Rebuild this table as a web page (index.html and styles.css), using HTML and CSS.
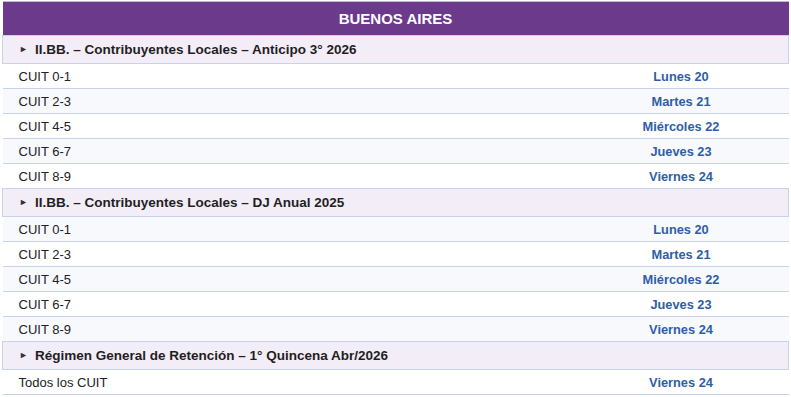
FILE: index.html
```html
<!DOCTYPE html>
<html lang="es">
<head>
<meta charset="utf-8">
<link rel="stylesheet" href="styles.css">
</head>
<body>
<div class="wrap">
<table class="cal">
  <colgroup><col class="c1"><col class="c2"></colgroup>
  <thead>
    <tr><th class="title" colspan="2">BUENOS AIRES</th></tr>
  </thead>
  <tbody>
    <tr class="sec"><td colspan="2"><span class="tri">&#9658;</span>II.BB. – Contribuyentes Locales – Anticipo 3° 2026</td></tr>
    <tr class="row"><td class="lbl">CUIT 0-1</td><td class="date">Lunes 20</td></tr>
    <tr class="row alt"><td class="lbl">CUIT 2-3</td><td class="date">Martes 21</td></tr>
    <tr class="row"><td class="lbl">CUIT 4-5</td><td class="date">Miércoles 22</td></tr>
    <tr class="row alt"><td class="lbl">CUIT 6-7</td><td class="date">Jueves 23</td></tr>
    <tr class="row"><td class="lbl">CUIT 8-9</td><td class="date">Viernes 24</td></tr>
    <tr class="sec"><td colspan="2"><span class="tri">&#9658;</span>II.BB. – Contribuyentes Locales – DJ Anual 2025</td></tr>
    <tr class="row alt"><td class="lbl">CUIT 0-1</td><td class="date">Lunes 20</td></tr>
    <tr class="row"><td class="lbl">CUIT 2-3</td><td class="date">Martes 21</td></tr>
    <tr class="row alt"><td class="lbl">CUIT 4-5</td><td class="date">Miércoles 22</td></tr>
    <tr class="row"><td class="lbl">CUIT 6-7</td><td class="date">Jueves 23</td></tr>
    <tr class="row alt"><td class="lbl">CUIT 8-9</td><td class="date">Viernes 24</td></tr>
    <tr class="sec"><td colspan="2"><span class="tri">&#9658;</span>Régimen General de Retención – 1° Quincena Abr/2026</td></tr>
    <tr class="row"><td class="lbl">Todos los CUIT</td><td class="date">Viernes 24</td></tr>
  </tbody>
</table>
</div>
</body>
</html>
```
FILE: styles.css
```css
html, body {
  margin: 0;
  padding: 0;
  background: #ffffff;
}
body {
  font-family: "Liberation Sans", Arial, sans-serif;
  color: #222222;
}
.wrap {
  padding: 1px 3px 0 2px;
}
.cal {
  width: 786px;
  border-collapse: collapse;
  table-layout: fixed;
  font-size: 13px;
}
.c1 { width: 571px; }
.c2 { width: 215px; }
.title {
  background: #6b3a8b;
  color: #ffffff;
  font-size: 15px;
  font-weight: bold;
  text-align: center;
  height: 34px;
  padding: 0;
  border-top: 1px solid #c5b6d8;
  box-sizing: border-box;
}
.sec td {
  background: #f3edf8;
  border: 1px solid #c6d3ea;
  height: 27px;
  padding: 0 0 0 16px;
  font-weight: bold;
  font-size: 13.5px;
  color: #1f1f1f;
}
.tri {
  display: inline-block;
  font-size: 9px;
  width: 16px;
  vertical-align: 2px;
  color: #333333;
}
.row td {
  height: 24px;
  padding: 0;
  border-bottom: 1px solid #c6d3ea;
  background: #ffffff;
}
.row.alt td {
  background: #f7f9fd;
}
.lbl {
  padding-left: 16px !important;
  color: #222222;
}
.date {
  text-align: center;
  font-weight: bold;
  font-size: 12.8px;
  color: #2f5ea7;
}
```
